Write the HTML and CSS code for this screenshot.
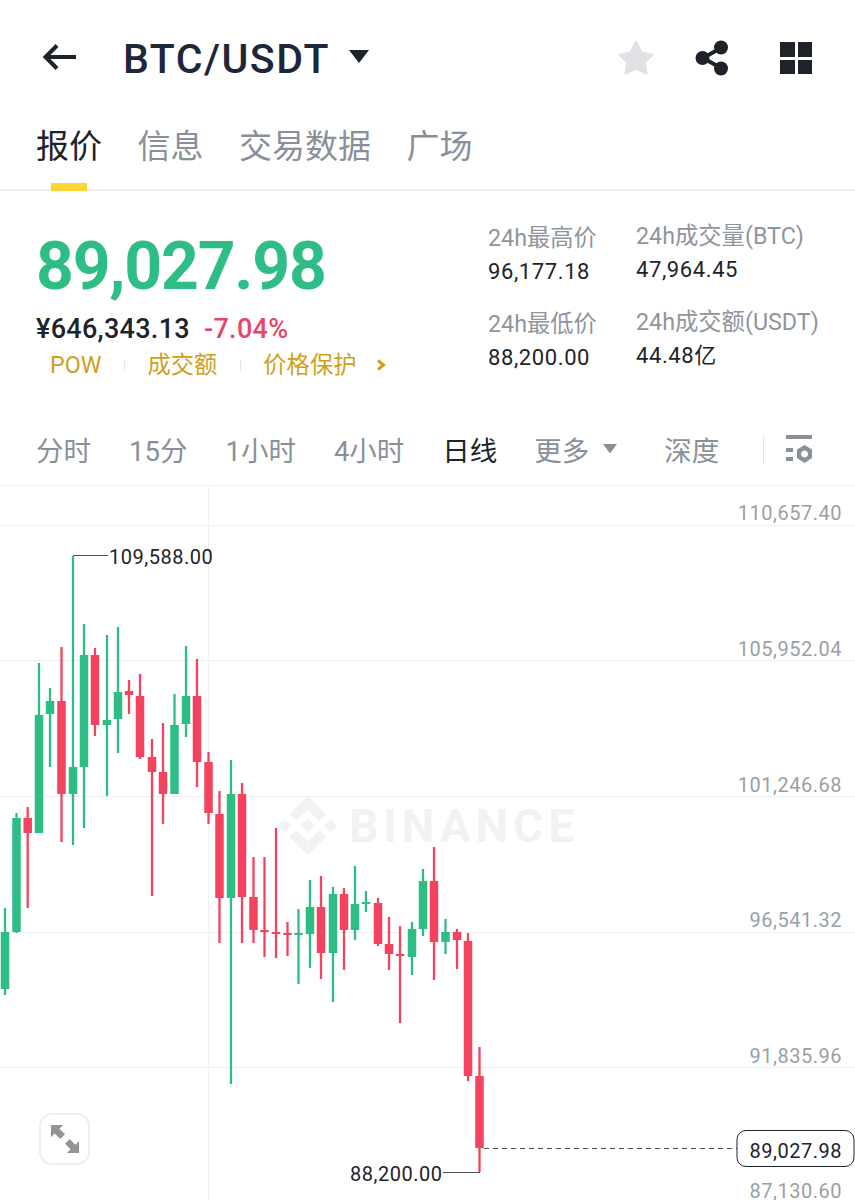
FILE: index.html
```html
<!DOCTYPE html>
<html lang="zh-CN">
<head>
<meta charset="utf-8">
<title>BTC/USDT</title>
<link rel="stylesheet" href="styles.css">
</head>
<body>
<div class="page">
  <header class="topbar">
    <svg class="back" viewBox="0 0 36 28"><path d="M34 14H4M15 2.500L3.500 14 15 25.500"/></svg>
    <h1 class="pair">BTC/USDT</h1>
    <svg class="pair-caret" viewBox="0 0 22 15"><path d="M1 1h20L11 14z"/></svg>
    <svg class="star" viewBox="0 0 36 36"><path d="M18 2.500l5 10.500 10.500 2-7.500 7.500 2 10.500L18 28l-10 5 2-10.500L2.500 15l10.500-2z"/></svg>
    <svg class="share" viewBox="0 0 34 36"><path class="share-line" d="M26 8L8 18l18 10"/><circle cx="26" cy="7.500" r="7"/><circle cx="7.500" cy="18" r="7"/><circle cx="26" cy="28.500" r="7"/></svg>
    <div class="blocks"><i></i><i></i><i></i><i></i></div>
  </header>

  <nav class="tabs">
    <a class="tab tab-on">报价</a>
    <a class="tab">信息</a>
    <a class="tab">交易数据</a>
    <a class="tab">广场</a>
  </nav>

  <section class="summary">
    <div class="quote">
      <div class="last">89,027.98</div>
      <div class="sub"><span class="cny">¥646,343.13</span><span class="pct">-7.04%</span></div>
      <div class="badges">
        <span>POW</span><i class="sep"></i><span>成交额</span><i class="sep"></i><span>价格保护</span>
        <svg class="chev" viewBox="0 0 10 12"><path d="M2 1.500L7.500 6 2 10.500"/></svg>
      </div>
    </div>
    <div class="stats">
      <dl class="stat-col">
        <dt>24h最高价</dt><dd>96,177.18</dd>
        <dt>24h最低价</dt><dd>88,200.00</dd>
      </dl>
      <dl class="stat-col stat-col-b">
        <dt>24h成交量(BTC)</dt><dd>47,964.45</dd>
        <dt>24h成交额(USDT)</dt><dd>44.48亿</dd>
      </dl>
    </div>
  </section>

  <nav class="frames">
    <a>分时</a><a>15分</a><a>1小时</a><a>4小时</a><a class="frame-on">日线</a>
    <a class="more">更多<svg class="more-caret" viewBox="0 0 14 10"><path d="M0 0h14L7 9.500z"/></svg></a>
    <a class="depth">深度</a>
    <i class="frame-sep"></i>
    <svg class="settings" viewBox="0 0 28 28"><path class="settings-bar" d="M1 0h26v4H1zM1 13h7v4H1zM1 22h7v4H1z"/><path class="settings-hex" fill-rule="evenodd" d="M19.500 10l7.500 4.500v8.500L19.500 28 12 23v-8.500zM19.500 15.500a3.500 3.500 0 1 0 .01 0z"/></svg>
  </nav>

  <main class="chart">
    <svg class="plot" viewBox="0 486 855 714">
      <path class="grid" d="M0 525.500H855M0 660.500H855M0 796.500H855M0 932.500H855M0 1067.500H855M208.500 486V1200"/>
      <g class="mark">
        <path transform="translate(278 796) scale(.468)" d="M38.730 53.200l24.590-24.580 24.600 24.600 14.300-14.310L63.320 0 24.420 38.900zM0 63.310l14.300-14.310 14.310 14.310-14.310 14.300zM38.730 73.410l24.590 24.590 24.600-24.600 14.310 14.290-38.900 38.910-38.910-38.880zM98 63.310l14.300-14.310 14.310 14.300-14.310 14.320zM77.830 63.300L63.320 48.780 52.590 59.510l-1.240 1.230-2.540 2.540 14.510 14.500 14.510-14.470z"/>
        <text class="mark-text" x="349" y="842">BINANCE</text>
      </g>
      <path class="wick up" d="M5 908V995M16.500 813V933M39 663V833M50 688V767M73 556V845M84 624V828M107 635V796M118 627V753M174.500 694V794M186 646V737M231 760V1084M298.500 909V984M310 880V968M333 887V1002M355 866V940M366 891V912M412 922V975M423 869V936M445.500 919V954"/>
      <path class="body up" d="M5 932V989M16.500 818V932M39 715V833M50 701V714M73 767V794M84 655V767M107 720V725M118 692V719M174.500 725V794M186 696V724M231 794V898M298.500 933V935M310 907V934M333 894V953M355 904V930M366 902V904M412 929V957M423 881V929M445.500 932V942"/>
      <path class="wick down" d="M27.700 807V908M61.500 647V842M95 648V736M129 680V714M140 674V759M152 739V896M163 723V824M197 659V787M208.500 752V824M219.500 791V943M242 783V943M253.500 857V943M264.500 857V957M276 828V958M287.500 922V956M321 876V979M344 888V970M378 898V946M389 917V970M400 926V1023M434 847V980M457 929V969M468 933V1081M479.500 1047V1172"/>
      <path class="body down" d="M27.700 818V833M61.500 701V794M95 655V725M129 691V695M140 696V757M152 757V772M163 772V794M197 696V762M208.500 762V813M219.500 814V898M242 794V897M253.500 897V930M264.500 930V932M276 932V934M287.500 933V935M321 907V953M344 894V930M378 903V944M389 944V954M400 954V956M434 881V942M457 932V940M468 941V1076M479.500 1076V1148"/>
      <path class="callout" d="M73 555.500H108M443 1172.500H480"/>
      <path class="dash" d="M484 1148.500H737"/>
      <text class="label-dark" x="109" y="564">109,588.00</text>
      <text class="label-dark" x="350" y="1181">88,200.00</text>
      <g class="axis">
        <text x="842" y="520">110,657.40</text>
        <text x="842" y="656">105,952.04</text>
        <text x="842" y="792">101,246.68</text>
        <text x="842" y="927">96,541.32</text>
        <text x="842" y="1063">91,835.96</text>
        <text x="842" y="1198">87,130.60</text>
      </g>
      <rect class="tag" x="737" y="1130.500" width="117" height="36" rx="9"/>
      <text class="tag-text" x="842" y="1158">89,027.98</text>
    </svg>
    <button class="expand" type="button" aria-label="expand">
      <svg viewBox="0 0 32 32"><path d="M1 1h13l-4 4 6 6-5 5-6-6-4 4zM31 31H18l4-4-6-6 5-5 6 6 4-4z"/></svg>
    </button>
  </main>
</div>
</body>
</html>
```

FILE: styles.css
```css
* { box-sizing: border-box; margin: 0; padding: 0; }
html, body { background: #fff; }
body { font-family: Roboto, "Noto Sans CJK SC", sans-serif; color: #1e2329; }
.page { width: 855px; height: 1200px; overflow: hidden; display: flex; flex-direction: column; }

.topbar { height: 118px; display: flex; align-items: center; padding: 0 43px 2px 42px; }
.back { width: 36px; height: 28px; margin-top: -3px; fill: none; stroke: #1e2329; stroke-width: 4; }
.pair { margin: 2px 0 0 45px; font-size: 41px; font-weight: 500; letter-spacing: 1.5px; color: #1e2639; line-height: 1; }
.pair-caret { width: 22px; height: 15px; margin: -3px 0 0 18px; fill: #1e2329; }
.star { width: 36px; height: 36px; margin-left: auto; fill: #dfe1e4; stroke: #dfe1e4; stroke-width: 3; stroke-linejoin: round; }
.share { width: 34px; height: 36px; margin-left: 41px; fill: #1e2329; }
.share-line { fill: none; stroke: #1e2329; stroke-width: 4; }
.blocks { width: 32px; height: 32px; margin-left: 51px; display: grid; grid-template-columns: 1fr 1fr; gap: 3px; }
.blocks i { background: #1e2329; }

.tabs { height: 73px; display: flex; gap: 35.500px; padding: 2px 0 0 36px; border-bottom: 2px solid #eeeff0; }
.tab { position: relative; font-size: 33px; line-height: 54px; color: #8a9099; }
.tab-on { color: #1e2329; }
.tab-on::after { content: ""; position: absolute; left: 15px; bottom: -2px; width: 36px; height: 8px; background: #fcd535; }

.summary { height: 207px; flex: none; display: flex; padding-left: 36px; }
.quote { width: 452px; }
.last { margin-top: 37px; font-size: 66px; font-weight: 700; line-height: 78px; letter-spacing: -1.200px; color: #2ebd85; }
.sub { margin-top: 7px; display: flex; gap: 14px; font-size: 27px; line-height: 32px; font-weight: 500; letter-spacing: .3px; }
.cny { color: #1e2329; }
.pct { color: #e9456a; }
.badges { display: flex; align-items: center; margin: 4px 0 0 14px; font-size: 23.300px; line-height: 32px; color: #cf9f1c; }
.sep { width: 1px; height: 13px; margin: 0 22.500px; background: #e9e9e9; }
.chev { width: 10px; height: 12px; margin-left: 20px; fill: none; stroke: #cf9f1c; stroke-width: 3; }

.stats { display: flex; gap: 47px; padding-top: 29px; }
.stat-col { width: 101px; white-space: nowrap; }
.stat-col-b { margin-top: -2px; }
.stat-col dt { font-size: 23.300px; line-height: 37px; color: #8f959d; }
.stat-col dd { font-size: 22px; line-height: 30px; margin-bottom: 19px; letter-spacing: .6px; color: #1e2329; }

.frames { height: 88px; flex: none; display: flex; align-items: center; gap: 38px; padding: 14px 0 0 36px; border-bottom: 1px solid #f0f1f2; font-size: 27.500px; color: #8a9099; }
.frame-on { color: #1e2329; }
.more { display: flex; align-items: center; gap: 14px; margin-left: -1px; }
.more-caret { width: 14px; height: 10px; fill: #8a9099; }
.depth { margin-left: 9px; }
.frame-sep { width: 1px; height: 28px; margin-left: 6px; background: #e2e3e5; }
.settings { width: 28px; height: 28px; margin-left: -17px; }
.settings-bar, .settings-hex { fill: #8a9099; }

.chart { position: relative; flex: 1; }
.plot { display: block; width: 855px; height: 714px; }
.grid { fill: none; stroke: #f0f1f2; stroke-width: 1; }
.mark { fill: #f1f2f3; }
.mark-text { font-size: 46px; font-weight: 700; letter-spacing: 5px; }
.wick { fill: none; stroke-width: 2.300; }
.body { fill: none; stroke-width: 8.500; }
.up { stroke: #2ebd85; }
.down { stroke: #f4435e; }
.callout { fill: none; stroke: #4a4f55; stroke-width: 1; }
.dash { fill: none; stroke: #4a4f55; stroke-width: 1; stroke-dasharray: 5 4; }
.label-dark { font-size: 20px; letter-spacing: .5px; fill: #1e2329; }
.axis text { font-size: 20px; letter-spacing: .5px; text-anchor: end; fill: #9a9fa6; }
.tag { fill: #fff; stroke: #1e2329; stroke-width: 1; }
.tag-text { font-size: 20px; letter-spacing: .5px; text-anchor: end; fill: #1e2329; }
.expand { position: absolute; left: 39px; top: 627px; width: 51px; height: 52px; display: flex; align-items: center; justify-content: center; background: #fff; border: 2px solid #eeeff0; border-radius: 13px; }
.expand svg { width: 30px; height: 30px; fill: #929498; }
```
